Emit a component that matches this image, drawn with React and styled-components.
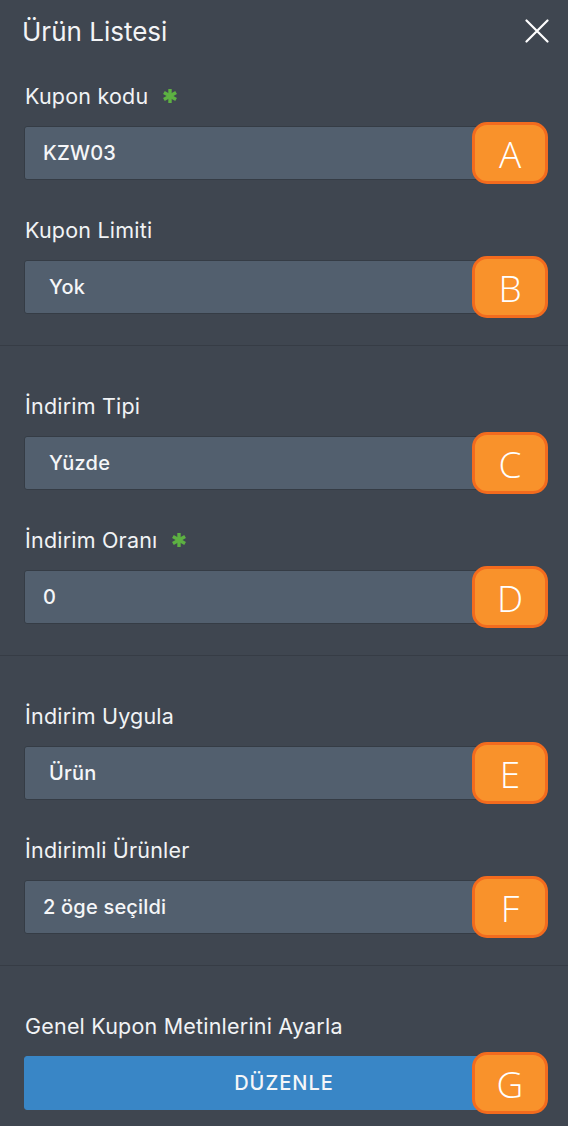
import React from "react";
import styled, { createGlobalStyle } from "styled-components";

const Global = createGlobalStyle`
  html, body { margin: 0; padding: 0; background: #3f4650; }
  body { font-family: Inter, "Noto Sans", "DejaVu Sans", sans-serif; -webkit-font-smoothing: antialiased; }
  * { box-sizing: border-box; }
`;

const Panel = styled.div`
  width: 568px;
  min-height: 1126px;
  background: #3f4650;
  color: #f1f3f5;
  display: flex;
  flex-direction: column;
`;

const Header = styled.div`
  height: 62px;
  display: flex;
  align-items: center;
  justify-content: space-between;
  padding: 0 18px 0 22px;
`;

const Title = styled.h1`
  margin: 0;
  font-size: 26px;
  font-weight: 400;
  color: #f3f4f6;
`;

const CloseButton = styled.button`
  background: none;
  border: none;
  padding: 0;
  width: 26px;
  height: 26px;
  display: flex;
  align-items: center;
  justify-content: center;
  cursor: pointer;
`;

const Section = styled.section`
  padding: ${(p) => (p.$first ? "21px" : "47px")} 24px 31px 24px;
  border-top: ${(p) => (p.$first ? "none" : "1px solid #363c45")};
  display: flex;
  flex-direction: column;
  gap: 37px;
`;

const Field = styled.div`
  display: flex;
  flex-direction: column;
  gap: 17px;
`;

const Label = styled.label`
  display: flex;
  align-items: center;
  gap: 15px;
  height: 26px;
  font-size: 21.5px;
  line-height: 26px;
  letter-spacing: 0.2px;
  color: #f1f3f5;
  padding-left: 1px;
`;

const Control = styled.div`
  position: relative;
  height: 54px;
  background: ${(p) => (p.$button ? "#3986c6" : "#525f6e")};
  border: 1px solid ${(p) => (p.$button ? "#3986c6" : "#353c45")};
  border-radius: 3px;
  display: flex;
  align-items: center;
  justify-content: ${(p) => (p.$button ? "center" : "flex-start")};
  padding-left: ${(p) => (p.$button ? "0" : p.$select ? "24px" : "18px")};
  font-size: 20px;
  font-weight: 500;
  color: #f5f6f8;
  letter-spacing: ${(p) => (p.$button ? "1px" : "0.2px")};
`;

const Badge = styled.span`
  position: absolute;
  right: -5px;
  top: 50%;
  transform: translateY(-50%);
  width: 76px;
  height: 62px;
  border-radius: 15px;
  background: #f9922b;
  border: 3px solid #f36b1e;
  display: flex;
  align-items: center;
  justify-content: center;
  font-size: 37px;
  font-weight: 300;
  letter-spacing: 0;
  color: #ffffff;
  font-family: "Open Sans", Inter, sans-serif;
`;

const Asterisk = () => (
  <svg width="14" height="14" viewBox="0 0 14 14" aria-hidden="true">
    <g stroke="#5db142" strokeWidth="3.4" strokeLinecap="butt">
      <line x1="7" y1="0" x2="7" y2="14" />
      <line x1="0.9" y1="3.5" x2="13.1" y2="10.5" />
      <line x1="0.9" y1="10.5" x2="13.1" y2="3.5" />
    </g>
  </svg>
);

const CloseIcon = () => (
  <svg width="24" height="24" viewBox="0 0 24 24" aria-hidden="true">
    <path d="M1.5 1.5 L22.5 22.5 M22.5 1.5 L1.5 22.5" stroke="#ffffff" strokeWidth="2.2" strokeLinecap="round" />
  </svg>
);

const sections = [
  [
    { label: "Kupon kodu", required: true, value: "KZW03", badge: "A" },
    { label: "Kupon Limiti", value: "Yok", select: true, badge: "B" },
  ],
  [
    { label: "İndirim Tipi", value: "Yüzde", select: true, badge: "C" },
    { label: "İndirim Oranı", required: true, value: "0", badge: "D" },
  ],
  [
    { label: "İndirim Uygula", value: "Ürün", select: true, badge: "E" },
    { label: "İndirimli Ürünler", value: "2 öge seçildi", badge: "F" },
  ],
  [{ label: "Genel Kupon Metinlerini Ayarla", value: "DÜZENLE", button: true, badge: "G" }],
];

export default function App() {
  return (
    <>
      <Global />
      <Panel>
        <Header>
          <Title>Ürün Listesi</Title>
          <CloseButton aria-label="Kapat">
            <CloseIcon />
          </CloseButton>
        </Header>
        {sections.map((fields, i) => (
          <Section key={i} $first={i === 0}>
            {fields.map((f) => (
              <Field key={f.label}>
                <Label>
                  {f.label}
                  {f.required && <Asterisk />}
                </Label>
                <Control $select={f.select} $button={f.button}>
                  {f.value}
                  <Badge>{f.badge}</Badge>
                </Control>
              </Field>
            ))}
          </Section>
        ))}
      </Panel>
    </>
  );
}
